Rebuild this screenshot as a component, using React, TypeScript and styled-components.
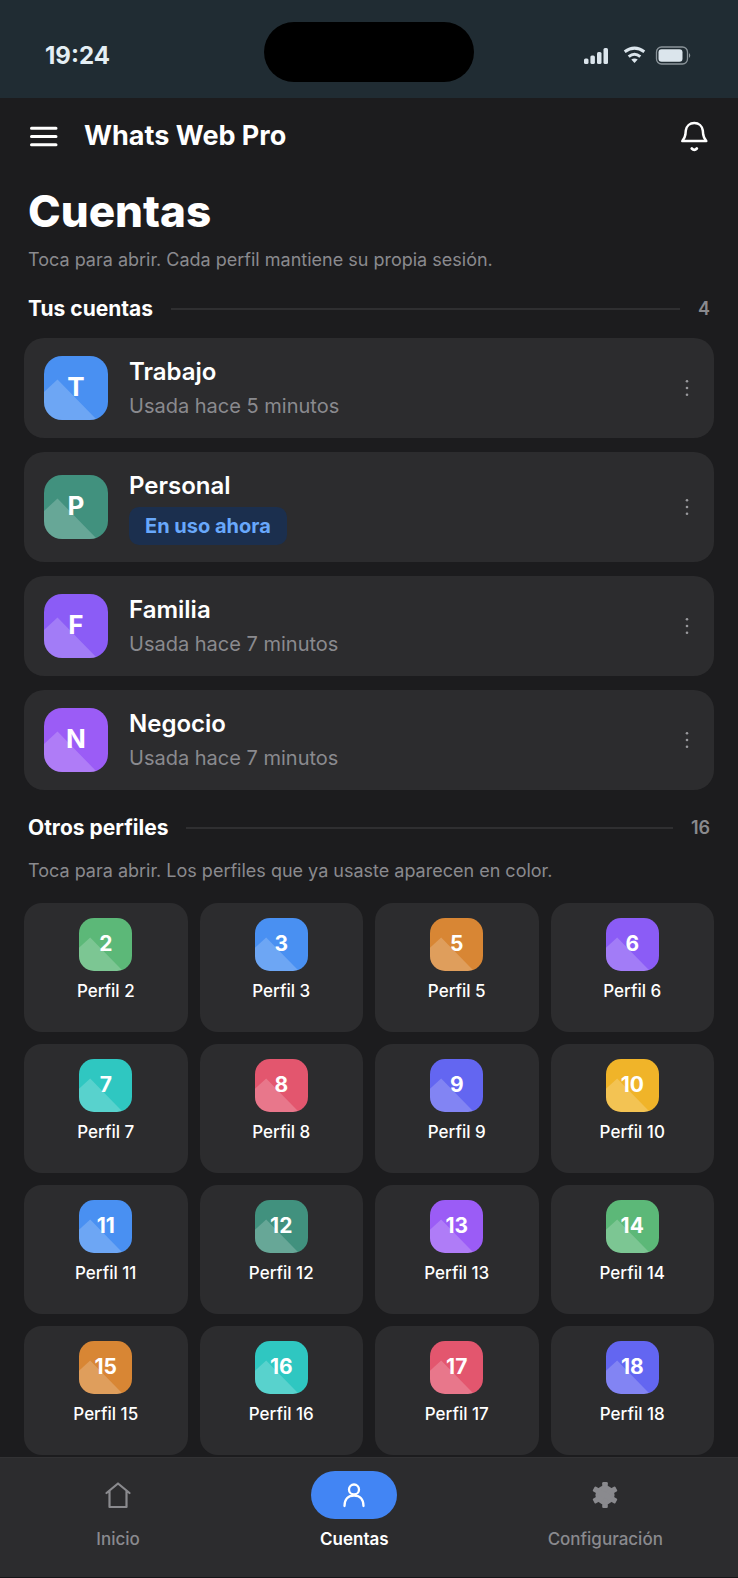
import React from "react";
import styled, { createGlobalStyle } from "styled-components";

const GlobalStyle = createGlobalStyle`
  *, *::before, *::after { box-sizing: border-box; }
  body {
    margin: 0;
    background: #1c1c1e;
    color: #fff;
    font-family: Inter, "Liberation Sans", sans-serif;
    -webkit-font-smoothing: antialiased;
  }
  h1, h2, p, ul { margin: 0; padding: 0; }
  ul { list-style: none; }
  button { font: inherit; color: inherit; background: none; border: 0; padding: 0; cursor: pointer; }
  a { color: inherit; text-decoration: none; }
  svg { display: block; }
`;

const Screen = styled.div`
  display: flex;
  flex-direction: column;
  min-height: 100vh;
`;

const StatusBar = styled.div`
  display: grid;
  grid-template-columns: 1fr 210px 1fr;
  align-items: center;
  height: 98px;
  padding: 6px 46px 0 45px;
  background: #202c33;
`;

const Clock = styled.time`
  padding-top: 8px;
  font-size: 24px;
  line-height: 32px;
  font-weight: 700;
  color: #e4eff5;
`;

const Island = styled.div`
  height: 60px;
  border-radius: 30px;
  background: #000;
`;

const StatusIcons = styled.div`
  display: flex;
  justify-content: flex-end;
  padding-top: 8px;
`;

const AppBar = styled.header`
  display: flex;
  align-items: center;
  height: 76px;
  padding: 0 28px;
`;

const AppTitle = styled.div`
  flex: 1;
  margin-left: 24px;
  font-size: 27px;
  line-height: 36px;
  font-weight: 700;
`;

const Main = styled.main`
  flex: 1;
  padding: 8px 24px 2px;
`;

const PageTitle = styled.h1`
  padding: 0 4px;
  font-size: 44px;
  line-height: 58px;
  font-weight: 800;
`;

const Hint = styled.p`
  padding: 0 4px;
  font-size: 18px;
  line-height: 24px;
  color: #8a8a8e;
`;

const Intro = styled.div`
  display: grid;
  gap: 8px;
  margin-bottom: 22px;
`;

const SectionHead = styled.div`
  display: flex;
  align-items: center;
  gap: 18px;
  height: 30px;
  padding: 0 4px;
`;

const SectionTitle = styled.h2`
  font-size: 21px;
  line-height: 30px;
  font-weight: 700;
`;

const Rule = styled.span`
  flex: 1;
  height: 2px;
  background: #2f2f31;
`;

const Count = styled.span`
  font-size: 18px;
  line-height: 30px;
  font-weight: 600;
  color: #8a8a8e;
`;

const Accounts = styled.ul`
  display: flex;
  flex-direction: column;
  gap: 14px;
  margin: 14px 0 23px;
`;

const AccountCard = styled.li`
  display: flex;
  align-items: center;
  padding: 16px 18px 16px 20px;
  border-radius: 20px;
  background: #2c2c2e;
`;

const AccountOpen = styled.button`
  display: flex;
  flex: 1;
  align-items: center;
  gap: 21px;
  text-align: left;
`;

const AccountText = styled.span`
  display: flex;
  flex-direction: column;
  align-items: flex-start;
`;

const AccountName = styled.span`
  font-size: 24px;
  line-height: 36px;
  font-weight: 600;
`;

const AccountNote = styled.span`
  font-size: 20px;
  line-height: 32px;
  color: #8a8a8e;
`;

const InUse = styled.span`
  margin: 3px 0 1px;
  padding: 0 16px;
  border-radius: 10px;
  background: #1b2f4e;
  color: #68a8fb;
  font-size: 20px;
  line-height: 38px;
  font-weight: 700;
`;

const MoreButton = styled.button`
  width: 18px;
  height: 32px;
`;

const Tile = styled.span<{ $size: number; $color: string }>`
  display: grid;
  place-items: center;
  flex: none;
  width: ${(p) => p.$size}px;
  height: ${(p) => p.$size}px;
  border-radius: ${(p) => (p.$size > 60 ? 18 : 15)}px;
  background: ${(p) => p.$color};
  overflow: hidden;

  > * { grid-area: 1 / 1; }
  > svg { width: 100%; height: 100%; }
`;

const TileLabel = styled.span<{ $large?: boolean }>`
  position: relative;
  padding-bottom: 2px;
  font-size: ${(p) => (p.$large ? 26 : 21)}px;
  line-height: 32px;
  font-weight: 700;
`;

const Profiles = styled.ul`
  display: grid;
  grid-template-columns: repeat(4, 1fr);
  gap: 12px;
  margin-top: 20px;
`;

const OtherProfiles = styled.section`
  > ${Hint} { margin-top: 16px; }
`;

const ProfileCard = styled.button`
  display: flex;
  flex-direction: column;
  align-items: center;
  gap: 8px;
  width: 100%;
  height: 129px;
  padding-top: 15px;
  border-radius: 18px;
  background: #2c2c2e;
`;

const ProfileName = styled.span`
  font-size: 17px;
  line-height: 24px;
  font-weight: 500;
`;

const NavBar = styled.nav`
  display: flex;
  justify-content: space-around;
  height: 121px;
  padding-top: 13px;
  border-top: 1px solid #323234;
  border-bottom: 1px solid #151517;
  background: #2c2c2e;
`;

const NavItem = styled.a<{ $active?: boolean }>`
  display: flex;
  flex-direction: column;
  align-items: center;
  gap: 8px;
  color: ${(p) => (p.$active ? "#fff" : "#8a8a8e")};
  font-size: 17px;
  line-height: 24px;
  font-weight: ${(p) => (p.$active ? 600 : 500)};
`;

const NavPill = styled.span<{ $active?: boolean }>`
  display: grid;
  place-items: center;
  width: 86px;
  height: 48px;
  border-radius: 24px;
  background: ${(p) => (p.$active ? "#4285f4" : "transparent")};
`;

const blue = "#4990f2";
const pine = "#41917e";
const violet = "#8b5cf6";
const purple = "#9b5cf6";
const green = "#5cb878";
const orange = "#d88634";
const teal = "#2fc7c1";
const rose = "#e3566e";
const indigo = "#6366f1";
const amber = "#f0b429";

const accounts = [
  { name: "Trabajo", color: blue, note: "Usada hace 5 minutos" },
  { name: "Personal", color: pine, note: null },
  { name: "Familia", color: violet, note: "Usada hace 7 minutos" },
  { name: "Negocio", color: purple, note: "Usada hace 7 minutos" },
];

const profiles: [number, string][] = [
  [2, green], [3, blue], [5, orange], [6, violet],
  [7, teal], [8, rose], [9, indigo], [10, amber],
  [11, blue], [12, pine], [13, purple], [14, green],
  [15, orange], [16, teal], [17, rose], [18, indigo],
];

function Avatar({ label, color, large }: { label: string; color: string; large?: boolean }) {
  return (
    <Tile $size={large ? 64 : 53} $color={color}>
      <svg viewBox="0 0 64 64" aria-hidden="true">
        <path d="M0 36 L13.5 23.5 L53 64 H0 Z" fill="#fff" fillOpacity="0.2" />
      </svg>
      <TileLabel $large={large}>{label}</TileLabel>
    </Tile>
  );
}

function SystemIcons() {
  return (
    <svg width="108" height="20" viewBox="0 0 108 20" fill="#dbe5ec" aria-hidden="true">
      <rect x="0" y="12.500" width="4.500" height="5.500" rx="1.5" />
      <rect x="6.400" y="9.500" width="4.500" height="8.500" rx="1.5" />
      <rect x="13" y="6" width="4.500" height="12" rx="1.5" />
      <rect x="19.500" y="2" width="4.500" height="16" rx="1.5" />
      <g fill="none" stroke="#dbe5ec" strokeWidth="3">
        <path d="M40.700 5.700 Q50.500 -1.500 60.300 5.700" />
        <path d="M44.700 10.600 Q50.500 6 56.300 10.600" />
      </g>
      <path d="M47.300 13.600 Q50.500 11.400 53.700 13.600 L50.500 17 Z" />
      <rect x="72.500" y="1" width="31" height="17" rx="5" fill="none" stroke="#8a949a" strokeWidth="1.300" />
      <rect x="74.500" y="3.200" width="24" height="12.600" rx="3" />
      <path d="M105 7 Q107.500 9.500 105 12 Z" fill="#8a949a" />
    </svg>
  );
}

function SectionTop({ title, count }: { title: string; count: number }) {
  return (
    <SectionHead>
      <SectionTitle>{title}</SectionTitle>
      <Rule />
      <Count>{count}</Count>
    </SectionHead>
  );
}

export default function App() {
  return (
    <Screen>
      <GlobalStyle />
      <StatusBar>
        <Clock>19:24</Clock>
        <Island />
        <StatusIcons><SystemIcons /></StatusIcons>
      </StatusBar>

      <AppBar>
        <button type="button" aria-label="Abrir menú">
          <svg width="32" height="32" viewBox="0 0 32 32" stroke="#fff" strokeWidth="3" strokeLinecap="round">
            <path d="M3.500 8.300 H28 M3.500 16.500 H28 M3.500 24.700 H28" />
          </svg>
        </button>
        <AppTitle>Whats Web Pro</AppTitle>
        <button type="button" aria-label="Notificaciones">
          <svg width="32" height="32" viewBox="0 0 32 32" fill="none" stroke="#fff" strokeWidth="2.500" strokeLinecap="round" strokeLinejoin="round">
            <path d="M4.300 21 H28.300 C26.600 19 25.600 17.500 25.200 14.500 L24.800 10.500 C24.200 6 20.800 3 16.300 3 C11.800 3 8.400 6 7.800 10.500 L7.400 14.500 C7 17.500 6 19 4.300 21 Z" />
            <path d="M13.800 28.500 Q16.300 31.200 18.800 28.500" strokeWidth="2.800" />
          </svg>
        </button>
      </AppBar>

      <Main>
        <Intro>
          <PageTitle>Cuentas</PageTitle>
          <Hint>Toca para abrir. Cada perfil mantiene su propia sesión.</Hint>
        </Intro>

        <section>
          <SectionTop title="Tus cuentas" count={4} />
          <Accounts>
            {accounts.map((a) => (
              <AccountCard key={a.name}>
                <AccountOpen type="button">
                  <Avatar label={a.name[0]} color={a.color} large />
                  <AccountText>
                    <AccountName>{a.name}</AccountName>
                    {a.note ? <AccountNote>{a.note}</AccountNote> : <InUse>En uso ahora</InUse>}
                  </AccountText>
                </AccountOpen>
                <MoreButton type="button" aria-label={`Opciones de ${a.name}`}>
                  <svg width="18" height="32" viewBox="0 0 18 32" fill="#98989c">
                    <circle cx="9" cy="9.300" r="1.300" />
                    <circle cx="9" cy="16" r="1.300" />
                    <circle cx="9" cy="22.700" r="1.300" />
                  </svg>
                </MoreButton>
              </AccountCard>
            ))}
          </Accounts>
        </section>

        <OtherProfiles>
          <SectionTop title="Otros perfiles" count={16} />
          <Hint>Toca para abrir. Los perfiles que ya usaste aparecen en color.</Hint>
          <Profiles>
            {profiles.map(([n, color]) => (
              <li key={n}>
                <ProfileCard type="button">
                  <Avatar label={String(n)} color={color} />
                  <ProfileName>Perfil {n}</ProfileName>
                </ProfileCard>
              </li>
            ))}
          </Profiles>
        </OtherProfiles>
      </Main>

      <NavBar>
        <NavItem href="#inicio">
          <NavPill>
            <svg width="28" height="28" viewBox="0 0 28 28" fill="none" stroke="currentColor" strokeWidth="2.200" strokeLinecap="round" strokeLinejoin="round">
              <path d="M2.500 12 L14 2.500 L25.500 12 M5.500 10 V26 H22.500 V10" />
            </svg>
          </NavPill>
          Inicio
        </NavItem>
        <NavItem href="#cuentas" $active aria-current="page">
          <NavPill $active>
            <svg width="28" height="28" viewBox="0 0 28 28" fill="none" stroke="currentColor" strokeWidth="2.300" strokeLinecap="round">
              <circle cx="14" cy="8.500" r="5" />
              <path d="M4.500 25 C4.500 18 8.500 14.500 14 14.500 C19.500 14.500 23.500 18 23.500 25" />
            </svg>
          </NavPill>
          Cuentas
        </NavItem>
        <NavItem href="#configuracion">
          <NavPill>
            <svg width="28" height="28" viewBox="0 0 28 28" fill="currentColor">
              <circle cx="14" cy="14" r="9.600" />
              <rect x="11.200" y="1" width="5.600" height="26" rx="1.200" />
              <rect x="11.200" y="1" width="5.600" height="26" rx="1.200" transform="rotate(60 14 14)" />
              <rect x="11.200" y="1" width="5.600" height="26" rx="1.200" transform="rotate(120 14 14)" />
            </svg>
          </NavPill>
          Configuración
        </NavItem>
      </NavBar>
    </Screen>
  );
}
